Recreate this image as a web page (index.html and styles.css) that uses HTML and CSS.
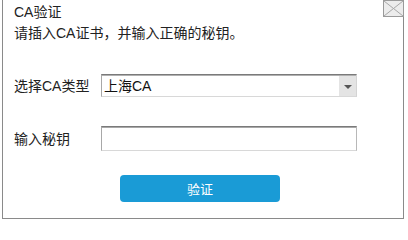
FILE: index.html
```html
<!DOCTYPE html>
<html lang="zh-CN">
<head>
<meta charset="utf-8">
<title>CA验证</title>
<link rel="stylesheet" href="styles.css">
</head>
<body>
<div class="panel">
  <div class="close" aria-label="关闭">
    <svg width="21" height="17" viewBox="0 0 21 17">
      <rect x="0.5" y="0.5" width="20" height="16" fill="#ececec" stroke="#9a9a9a"/>
      <path d="M1 1 L20 16 M20 1 L1 16" stroke="#a8a8a8" stroke-width="1"/>
    </svg>
  </div>
  <div class="title">CA验证</div>
  <div class="hint">请插入CA证书，并输入正确的秘钥。</div>
  <div class="form">
    <div class="row row-select">
      <span class="label">选择CA类型</span>
      <div class="select">
        <span class="select-value">上海CA</span>
        <span class="select-arrow"><span class="tri"></span></span>
      </div>
    </div>
    <div class="row row-input">
      <span class="label">输入秘钥</span>
      <div class="input"></div>
    </div>
  </div>
  <div class="actions">
    <button class="btn">验证</button>
  </div>
</div>
</body>
</html>
```

FILE: styles.css
```css
html, body {
  margin: 0;
  padding: 0;
  background: #ffffff;
}
body {
  font-family: "Liberation Sans", "Noto Sans CJK SC", sans-serif;
  font-size: 14px;
  color: #222222;
}
.panel {
  position: relative;
  box-sizing: border-box;
  margin-left: 2px;
  width: 402px;
  height: 219px;
  border: 1px solid #8a8a8a;
  border-top: none;
  padding-left: 11px;
}
.close {
  position: absolute;
  top: 0;
  right: -1px;
  width: 21px;
  height: 17px;
  line-height: 0;
}
.title {
  padding-top: 2px;
  height: 20px;
  line-height: 20px;
}
.hint {
  margin-top: 1px;
  height: 20px;
  line-height: 20px;
}
.form {
  margin-top: 31px;
  display: flex;
  flex-direction: column;
  gap: 29px;
}
.row {
  display: grid;
  grid-template-columns: 87px 256px;
  align-items: center;
}
.label {
  line-height: 20px;
}
.select {
  box-sizing: border-box;
  height: 23px;
  border-top: 1px solid #7a7a7a;
  border-left: 1px solid #a8a8a8;
  border-right: 1px solid #d4d4d4;
  border-bottom: 1px solid #d8d8d8;
  box-shadow: inset 0 1px 0 #b0b0b0;
  display: flex;
  align-items: center;
  justify-content: space-between;
}
.select-value {
  padding-left: 2px;
  line-height: 20px;
  color: #111111;
}
.select-arrow {
  align-self: stretch;
  width: 17px;
  margin-top: 1px;
  background-color: #e4e4e4;
  background-image: radial-gradient(#d6d6d6 0.6px, transparent 0.7px);
  background-size: 2px 2px;
  display: flex;
  align-items: center;
  justify-content: center;
}
.tri {
  width: 0;
  height: 0;
  border-left: 4px solid transparent;
  border-right: 4px solid transparent;
  border-top: 4px solid #555555;
  margin-top: 2px;
}
.input {
  box-sizing: border-box;
  height: 25px;
  border-top: 1px solid #7a7a7a;
  border-left: 1px solid #a8a8a8;
  border-right: 1px solid #b8b8b8;
  border-bottom: 1px solid #d8d8d8;
  box-shadow: inset 0 1px 0 #a8a8a8;
  background: #ffffff;
}
.actions {
  margin-top: 24px;
  padding-left: 106px;
}
.btn {
  display: block;
  width: 160px;
  height: 27px;
  border: none;
  border-radius: 4px;
  background: #1a9bd6;
  color: #ffffff;
  font-family: "Liberation Sans", "Noto Sans CJK SC", sans-serif;
  font-size: 13px;
  padding: 0;
  cursor: pointer;
}
```
